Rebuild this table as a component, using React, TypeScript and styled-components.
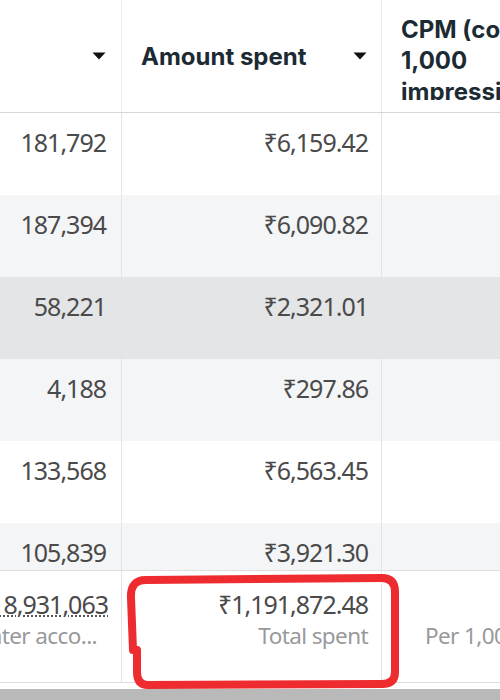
import React from "react";
import styled, { createGlobalStyle } from "styled-components";

const Global = createGlobalStyle`
  html, body { margin: 0; padding: 0; background: #ffffff; }
  body { width: 500px; height: 700px; overflow: hidden; }
`;

const COLS = "122px 260px 240px";

const Page = styled.div`
  position: relative;
  width: 500px;
  height: 700px;
  overflow: hidden;
  background: #ffffff;
  display: flex;
  flex-direction: column;
`;

const HeaderRow = styled.div`
  display: grid;
  grid-template-columns: ${COLS};
  height: 112px;
  border-bottom: 1px solid #d6d6d6;
  flex: none;
`;

const HeaderCell = styled.div<{ $last?: boolean }>`
  box-sizing: border-box;
  border-right: ${(p) => (p.$last ? "none" : "1px solid #ededed")};
  display: flex;
  align-items: center;
  overflow: hidden;
  font-family: Inter, "Liberation Sans", sans-serif;
  font-weight: 700;
  font-size: 24px;
  color: #1c2b33;
`;

const CaretOnly = styled(HeaderCell)`
  justify-content: flex-end;
  padding-right: 15px;
`;

const TitleCell = styled(HeaderCell)`
  justify-content: space-between;
  padding: 0 14px 0 19px;
`;

const Title = styled.span`
  letter-spacing: 0px;
`;

const WrapCell = styled(HeaderCell)`
  align-items: flex-start;
  padding: 14px 0 0 19px;
`;

const WrapText = styled.div`
  line-height: 31px;
  height: 86px;
  overflow: hidden;
  white-space: nowrap;
  & > span { display: block; }
`;

const Body = styled.div`
  height: 457px;
  overflow: hidden;
  flex: none;
`;

const Row = styled.div<{ $tone: string }>`
  display: grid;
  grid-template-columns: ${COLS};
  height: 82px;
  background: ${(p) => p.$tone};
`;

const Cell = styled.div<{ $last?: boolean; $pr: number }>`
  box-sizing: border-box;
  border-right: ${(p) => (p.$last ? "none" : "1px solid #e4e4e4")};
  padding: 14px ${(p) => p.$pr}px 0 0;
  text-align: right;
  font-family: "Noto Sans", "DejaVu Sans", sans-serif;
  font-size: 25px;
  letter-spacing: -1px;
  line-height: 30px;
  color: #4a4a4a;
  white-space: nowrap;
  overflow: hidden;
`;

const FooterRow = styled.div`
  display: grid;
  grid-template-columns: ${COLS};
  height: 113px;
  border-top: 1px solid #dedede;
  border-bottom: 1px solid #dcdcdc;
  box-sizing: border-box;
  flex: none;
`;

const FootCell = styled.div<{ $last?: boolean; $pr: number; $align?: string }>`
  box-sizing: border-box;
  border-right: ${(p) => (p.$last ? "none" : "1px solid #e4e4e4")};
  padding: 18px ${(p) => p.$pr}px 0 ${(p) => (p.$align === "left" ? 43 : 0)}px;
  display: flex;
  flex-direction: column;
  align-items: ${(p) => (p.$align === "left" ? "flex-start" : "flex-end")};
  justify-content: ${(p) => (p.$align === "left" ? "center" : "flex-start")};
  font-family: "Noto Sans", "DejaVu Sans", sans-serif;
  font-size: 25px;
  letter-spacing: -1px;
  line-height: 31px;
  white-space: nowrap;
  overflow: hidden;
`;

const Value = styled.span<{ $dotted?: boolean }>`
  color: #4a4a4a;
  text-decoration: ${(p) => (p.$dotted ? "underline dotted #555" : "none")};
  text-decoration-thickness: 2px;
  text-underline-offset: 1px;
`;

const Sub = styled.span<{ $pr?: number }>`
  color: #98999b;
  font-size: 22.5px;
  letter-spacing: -0.6px;
  padding-right: ${(p) => p.$pr ?? 0}px;
`;

const Gap = styled.div`
  height: 6px;
  flex: none;
`;

const BottomBar = styled.div`
  flex: 1;
  background: #b9b9b9;
`;

const Annotation = styled.svg`
  position: absolute;
  left: 0;
  top: 0;
  width: 500px;
  height: 700px;
  pointer-events: none;
`;

const Caret = () => (
  <svg width="14" height="8" viewBox="0 0 14 8">
    <path d="M0.5 0.5 H13.5 L7 7.5 Z" fill="#111" />
  </svg>
);

const rows: [string, string, string][] = [
  ["181,792", "₹6,159.42", "#ffffff"],
  ["187,394", "₹6,090.82", "#f4f5f7"],
  ["58,221", "₹2,321.01", "#e4e5e6"],
  ["4,188", "₹297.86", "#f4f5f7"],
  ["133,568", "₹6,563.45", "#ffffff"],
  ["105,839", "₹3,921.30", "#f4f5f7"],
];

export default function App() {
  return (
    <>
      <Global />
      <Page>
        <HeaderRow>
          <CaretOnly>
            <Caret />
          </CaretOnly>
          <TitleCell>
            <Title>Amount spent</Title>
            <Caret />
          </TitleCell>
          <WrapCell $last>
            <WrapText>
              <span>CPM (cost per</span>
              <span>1,000</span>
              <span>impressions)</span>
            </WrapText>
          </WrapCell>
        </HeaderRow>
        <Body>
          {rows.map(([a, b, tone]) => (
            <Row key={a} $tone={tone}>
              <Cell $pr={15}>{a}</Cell>
              <Cell $pr={13}>{b}</Cell>
              <Cell $pr={0} $last />
            </Row>
          ))}
        </Body>
        <FooterRow>
          <FootCell $pr={13}>
            <Value $dotted>18,931,063</Value>
            <Sub $pr={11}>Accounts Center acco...</Sub>
          </FootCell>
          <FootCell $pr={13}>
            <Value>₹1,191,872.48</Value>
            <Sub>Total spent</Sub>
          </FootCell>
          <FootCell $pr={0} $last $align="left">
            <Sub>Per 1,000 impressions</Sub>
          </FootCell>
        </FooterRow>
        <Gap />
        <BottomBar />
        <Annotation viewBox="0 0 500 700">
          <path
            d="M133 650 L131 598 Q130 580 146 580 L382 578 Q395 578 395 592 L395 672 Q395 684 382 684 L148 685 Q137 685 137 672 L137 650"
            fill="none"
            stroke="#ee2b2e"
            strokeWidth="8"
            strokeLinecap="round"
            strokeLinejoin="round"
          />
        </Annotation>
      </Page>
    </>
  );
}
